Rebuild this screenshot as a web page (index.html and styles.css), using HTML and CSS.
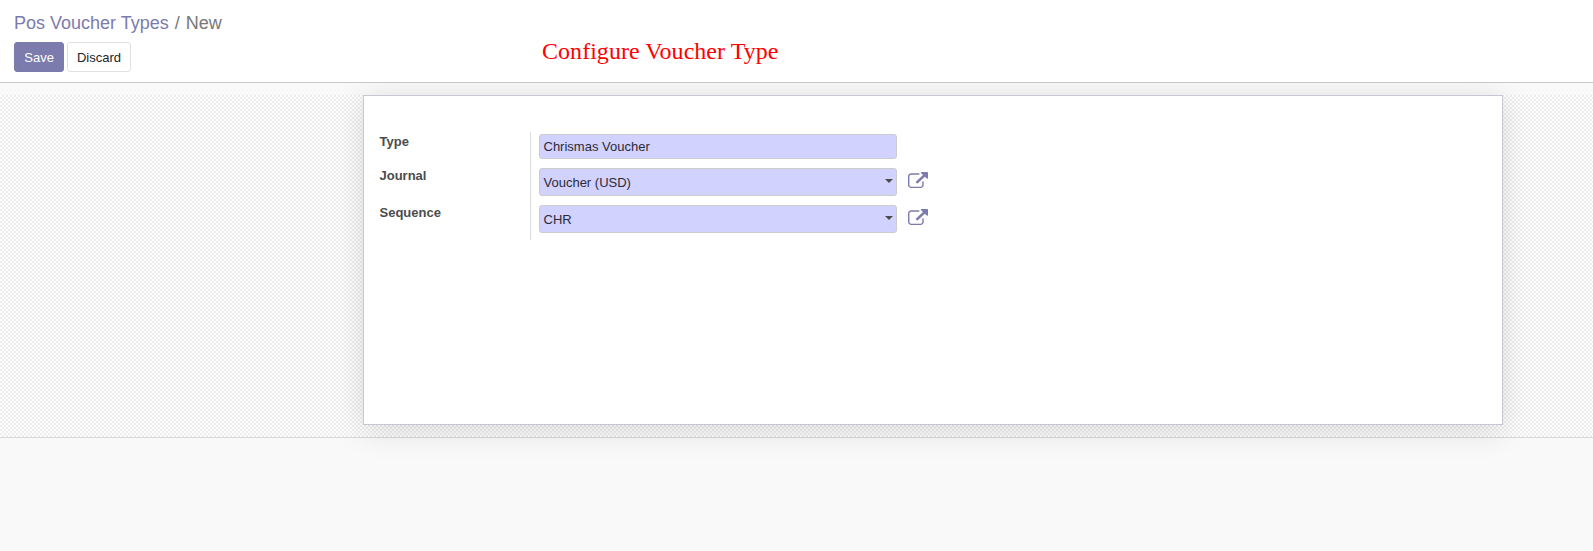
FILE: index.html
```html
<!DOCTYPE html>
<html lang="en">
<head>
<meta charset="utf-8">
<title>New - Pos Voucher Types</title>
<link rel="stylesheet" href="styles.css">
</head>
<body>
<svg width="0" height="0" class="defs"><symbol id="external-link" viewBox="0 0 1792 1536" preserveAspectRatio="none"><path d="M1408 928v320q0 119-84.5 203.5t-203.5 84.5h-832q-119 0-203.5-84.5t-84.5-203.5v-832q0-119 84.5-203.5t203.5-84.5h704q14 0 23 9t9 23v64q0 14-9 23t-23 9h-704q-66 0-113 47t-47 113v832q0 66 47 113t113 47h832q66 0 113-47t47-113v-320q0-14 9-23t23-9h64q14 0 23 9t9 23zm384-864v512q0 26-19 45t-45 19-45-19l-176-176-652 652q-10 10-23 10t-23-10l-114-114q-10-10-10-23t10-23l652-652-176-176q-19-19-19-45t19-45 45-19h512q26 0 45 19t19 45z"/></symbol></svg>
<header class="control-panel">
  <nav class="breadcrumb"><a>Pos Voucher Types</a><span class="sep">/</span><span>New</span></nav>
  <div class="buttons"><button class="btn primary">Save</button><button class="btn">Discard</button></div>
  <div class="caption">Configure Voucher Type</div>
</header>
<main class="form-view">
  <section class="sheet">
    <div class="group">
      <div class="labels"><label>Type</label><label>Journal</label><label>Sequence</label></div>
      <div class="fields">
        <div class="row"><div class="input short">Chrismas Voucher</div></div>
        <div class="row"><div class="input">Voucher (USD)<i class="caret"></i></div><svg class="link"><use href="#external-link"/></svg></div>
        <div class="row"><div class="input">CHR<i class="caret"></i></div><svg class="link"><use href="#external-link"/></svg></div>
      </div>
    </div>
  </section>
</main>
</body>
</html>
```
FILE: styles.css
```css
* { box-sizing: border-box; }
body { margin: 0; height: 551px; overflow: hidden; background: #f9f9f9; color: #4c4c4c; font: 13px/20px "Liberation Sans", Arial, sans-serif; }
.defs { display: block; }
.control-panel { position: relative; height: 83px; padding: 10px 14px 0; background: #fff; border-bottom: 1px solid #c8c8cc; }
.breadcrumb { display: flex; height: 32px; font-size: 18px; line-height: 27px; color: #777; }
.breadcrumb a { color: #7c7bad; }
.sep { margin: 0 6px; }
.buttons { display: flex; gap: 3px; }
.btn { height: 30px; padding: 2px 8.7px 0 9.3px; border: 1px solid #dee2e6; border-radius: 3px; background: #fff; color: #212529; font: inherit; }
.btn.primary { background: #7c7bad; border-color: #7c7bad; color: #fff; }
.caption { position: absolute; left: 542px; top: 36px; font: 24px/30px "Liberation Serif", serif; letter-spacing: .04px; color: #f00; white-space: nowrap; }
.form-view { height: 343px; margin-top: 12px; padding-left: 363px; border-bottom: 1px solid #d8d8d8; background: conic-gradient(#ededed 25%, #fff 0 50%, #ededed 0 75%, #fff 0) 0 0 / 4px 4px; }
.sheet { width: 1140px; height: 330px; padding: 36px 16px 0 15.5px; background: #fff; border: 1px solid #c8c8d3; box-shadow: 0 5px 30px rgba(0, 0, 0, .13); }
.group { display: flex; }
.labels { width: 150.5px; height: 108px; display: flex; flex-direction: column; font-weight: bold; }
.labels label { height: 34px; line-height: 20px; }
.labels label:nth-child(2) { height: 37px; }
.fields { height: 108px; border-left: 1px solid #ddd; padding: 2px 0 0 8px; display: flex; flex-direction: column; gap: 9px; }
.row { display: flex; align-items: center; gap: 11px; }
.input { width: 358px; height: 28px; padding: 2px 4px 0 3.5px; display: flex; align-items: center; justify-content: space-between; background: #d2d2ff; border: 1px solid #ccc; border-radius: 3px; color: #2b2b36; line-height: 24px; }
.input.short { height: 25px; padding-top: 0; line-height: 23px; }
.caret { border: 4px solid transparent; border-top-color: #4c4c4c; border-bottom: 0; margin: -5px -1px 0 0; }
.link { width: 20px; height: 16px; margin-top: -4px; fill: #7c7bad; }
```
